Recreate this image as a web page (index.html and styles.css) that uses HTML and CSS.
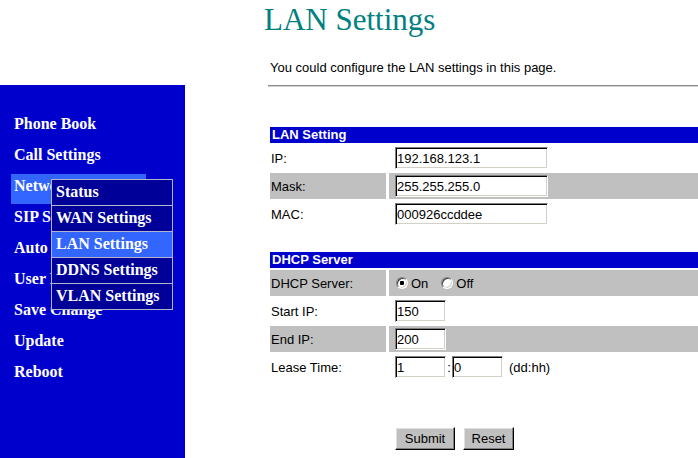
FILE: index.html
```html
<!DOCTYPE html>
<html lang="en">
<head>
<meta charset="utf-8">
<title>LAN Settings</title>
<link rel="stylesheet" href="styles.css">
</head>
<body>
<div class="page">
  <nav class="sidebar">
    <ul class="menu">
      <li class="menu-item">Phone Book</li>
      <li class="menu-item">Call Settings</li>
      <li class="menu-item active">Network
        <ul class="submenu">
          <li class="sub-item">Status</li>
          <li class="sub-item">WAN Settings</li>
          <li class="sub-item current">LAN Settings</li>
          <li class="sub-item">DDNS Settings</li>
          <li class="sub-item">VLAN Settings</li>
        </ul>
      </li>
      <li class="menu-item">SIP Settings</li>
      <li class="menu-item">Auto Provision</li>
      <li class="menu-item">User Management</li>
      <li class="menu-item">Save Change</li>
      <li class="menu-item">Update</li>
      <li class="menu-item">Reboot</li>
    </ul>
  </nav>
  <main class="content">
    <h1 class="title">LAN Settings</h1>
    <p class="intro">You could configure the LAN settings in this page.</p>
    <hr class="rule">
    <form class="settings">
      <section class="group">
        <div class="group-head">LAN Setting</div>
        <div class="row">
          <div class="label">IP:</div>
          <div class="field"><input class="text wide" type="text" value="192.168.123.1"></div>
        </div>
        <div class="row shaded">
          <div class="label">Mask:</div>
          <div class="field"><input class="text wide" type="text" value="255.255.255.0"></div>
        </div>
        <div class="row">
          <div class="label">MAC:</div>
          <div class="field"><input class="text wide" type="text" value="000926ccddee"></div>
        </div>
      </section>
      <section class="group dhcp">
        <div class="group-head">DHCP Server</div>
        <div class="row shaded">
          <div class="label">DHCP Server:</div>
          <div class="field">
            <label class="choice"><input class="radio" type="radio" name="dhcp" checked>On</label>
            <label class="choice"><input class="radio" type="radio" name="dhcp">Off</label>
          </div>
        </div>
        <div class="row">
          <div class="label">Start IP:</div>
          <div class="field"><input class="text short" type="text" value="150"></div>
        </div>
        <div class="row shaded">
          <div class="label">End IP:</div>
          <div class="field"><input class="text short" type="text" value="200"></div>
        </div>
        <div class="row">
          <div class="label">Lease Time:</div>
          <div class="field">
            <input class="text short" type="text" value="1"><span class="colon">:</span><input class="text short" type="text" value="0"><span class="unit">(dd:hh)</span>
          </div>
        </div>
      </section>
      <div class="actions">
        <button class="btn submit" type="button">Submit</button>
        <button class="btn reset" type="button">Reset</button>
      </div>
    </form>
  </main>
</div>
</body>
</html>
```
FILE: styles.css
```css
html, body {
  margin: 0;
  padding: 0;
  background: #ffffff;
  overflow: hidden;
}

.page {
  display: flex;
  height: 100vh;
}

/* ---------- sidebar ---------- */
.sidebar {
  flex: 0 0 185px;
  margin-top: 85px;
  background: #0000cc;
  padding-top: 27px;
  box-sizing: border-box;
}

.menu {
  list-style: none;
  margin: 0;
  padding: 0;
}

.menu-item {
  position: relative;
  width: 135px;
  height: 30px;
  margin: 0 0 1px 11px;
  padding-left: 3px;
  box-sizing: border-box;
  font-family: "Liberation Serif", "Times New Roman", serif;
  font-weight: bold;
  font-size: 16px;
  line-height: 23px;
  color: #ffffff;
  white-space: nowrap;
}

.menu-item.active {
  background: #3366ff;
}

.submenu {
  position: absolute;
  left: 40px;
  top: 5px;
  width: 122px;
  margin: 0;
  padding: 0;
  list-style: none;
  background: #000099;
  border: 1px solid #b4b4cc;
  box-sizing: border-box;
  z-index: 2;
}

.sub-item {
  height: 25px;
  padding-left: 4px;
  font-size: 16px;
  line-height: 23px;
  color: #ffffff;
  border-top: 1px solid #b4b4cc;
}

.sub-item:first-child {
  border-top: none;
}

.sub-item.current {
  background: #3366ff;
}

/* ---------- content ---------- */
.content {
  flex: 1;
  margin-left: 79px;
  font-family: "Liberation Sans", Arial, sans-serif;
  font-size: 13px;
  color: #000000;
}

.title {
  margin: 0;
  padding-top: 3px;
  font-family: "Liberation Serif", "Times New Roman", serif;
  font-weight: normal;
  font-size: 31px;
  line-height: 34px;
  color: #008080;
}

.intro {
  margin: 23px 0 0 6px;
  line-height: 15px;
}

.rule {
  margin: 10px 0 0 4px;
  height: 0;
  border: none;
  border-top: 1px solid #8c8c8c;
  border-bottom: 1px solid #d0d0d0;
}

.settings {
  margin: 40px 0 0 6px;
}

.group {
  display: flex;
  flex-direction: column;
  gap: 2px;
}

.group.dhcp {
  margin-top: 25px;
}

.group-head {
  height: 16px;
  line-height: 16px;
  padding-left: 2px;
  background: #0000cc;
  color: #ffffff;
  font-weight: bold;
}

.row {
  display: grid;
  grid-template-columns: 116px 1fr;
  column-gap: 3px;
  height: 26px;
}

.row.shaded .label,
.row.shaded .field {
  background: #c0c0c0;
}

.label {
  display: flex;
  align-items: center;
  padding-left: 1px;
}

.field {
  display: flex;
  align-items: center;
  padding-left: 6px;
}

.text {
  height: 22px;
  margin: 0;
  padding: 0 1px;
  box-sizing: border-box;
  font-family: "Liberation Sans", Arial, sans-serif;
  font-size: 13px;
  color: #000000;
  background: #ffffff;
  border: 1px solid;
  border-color: #808080 #ffffff #ffffff #808080;
  box-shadow: inset 1px 1px 0 #000000, inset -1px -1px 0 #d4d0c8;
  outline: none;
}

.text.wide {
  width: 153px;
}

.text.short {
  width: 51px;
}

.colon {
  width: 6px;
  text-align: center;
}

.unit {
  margin-left: 6px;
}

.choice {
  display: inline-flex;
  align-items: center;
  margin-right: 12px;
}

.radio {
  appearance: none;
  -webkit-appearance: none;
  width: 12px;
  height: 12px;
  margin: 0 3px 0 1px;
  border-radius: 50%;
  border: 1px solid;
  border-color: #808080 #ffffff #ffffff #808080;
  box-shadow: inset 1px 1px 0 #404040, inset -1px -1px 0 #d4d0c8;
  background: #ffffff;
  box-sizing: border-box;
}

.radio:checked {
  background: radial-gradient(circle, #000000 0 2px, #ffffff 2.5px);
}

.actions {
  display: flex;
  gap: 8px;
  margin-top: 47px;
  padding-left: 125px;
}

.btn {
  height: 23px;
  margin: 0;
  padding: 0;
  font-family: "Liberation Sans", Arial, sans-serif;
  font-size: 13px;
  color: #000000;
  background: #c0c0c0;
  border: 1px solid;
  border-color: #ffffff #000000 #000000 #ffffff;
  box-shadow: inset -1px -1px 0 #808080, inset 1px 1px 0 #dfdfdf;
  box-sizing: border-box;
}

.btn.submit {
  width: 60px;
}

.btn.reset {
  width: 51px;
}
```
